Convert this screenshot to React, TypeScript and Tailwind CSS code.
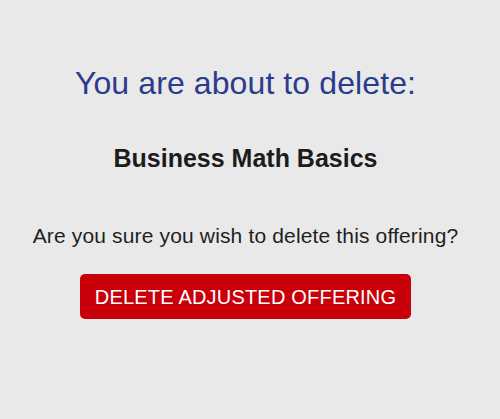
export default function App() {
  return (
    <div
      className="w-[500px] h-[419px] bg-[#e9e9e9] pr-[9px] flex flex-col items-center text-center"
      style={{ fontFamily: '"Liberation Sans", Arial, sans-serif' }}
    >
      <h1 className="mt-[64px] text-[32px] leading-[38px] font-normal text-[#2b3b8e] tracking-[0.1px]">
        You are about to delete:
      </h1>
      <h2 className="mt-[42px] text-[25px] leading-[29px] font-bold text-[#1c1c1c]">
        Business Math Basics
      </h2>
      <p className="mt-[50px] text-[21px] leading-[25px] text-[#1f1f1f] tracking-[0.15px]">
        Are you sure you wish to delete this offering?
      </p>
      <button className="mt-[26px] w-[331px] h-[45px] rounded-[5px] bg-[#c9000a] text-white text-[20px] leading-[24px] tracking-[0.2px]">
        DELETE ADJUSTED OFFERING
      </button>
    </div>
  );
}
